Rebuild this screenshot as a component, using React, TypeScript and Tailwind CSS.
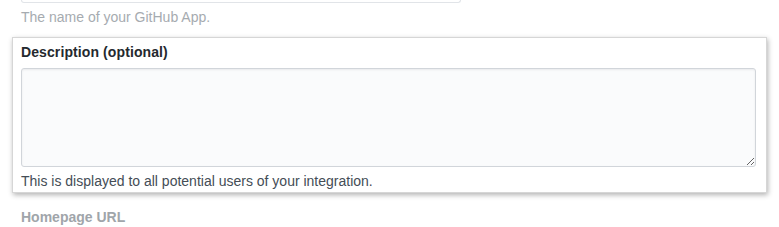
export default function App() {
  return (
    <div className="w-[779px] h-[227px] overflow-hidden bg-white font-['Liberation_Sans',Arial,sans-serif]">
      {/* previous field, mostly scrolled off */}
      <div className="ml-[21px] w-[440px] h-[3px] border-x border-b border-[#e1e4e8] rounded-b-[3px] bg-white" />
      <p className="mt-[5px] ml-[21px] text-[14px] leading-[18px] text-[#a6abb0]">The name of your GitHub App.</p>

      {/* highlighted field */}
      <div className="mt-[11px] ml-[12px] w-[755px] border border-[#d6d6d6] bg-white pl-[8px] pt-[5px] pb-[2px] shadow-[1px_2px_5px_rgba(0,0,0,0.3)]">
        <label className="block text-[14px] leading-[18px] font-bold text-[#24292e] tracking-[0.1px]">Description (optional)</label>
        <textarea
          className="mt-[7px] block w-[735px] h-[99px] rounded-[3px] border border-[#d1d5da] bg-[#fafbfc] shadow-[inset_0_1px_2px_rgba(27,31,35,0.075)] outline-none"
        />
        <p className="mt-[5px] text-[14px] leading-[18px] text-[#444d56]">This is displayed to all potential users of your integration.</p>
      </div>

      <p className="mt-[15px] ml-[21px] text-[14px] leading-[18px] font-bold text-[#a0a5aa]">Homepage URL</p>
    </div>
  );
}
